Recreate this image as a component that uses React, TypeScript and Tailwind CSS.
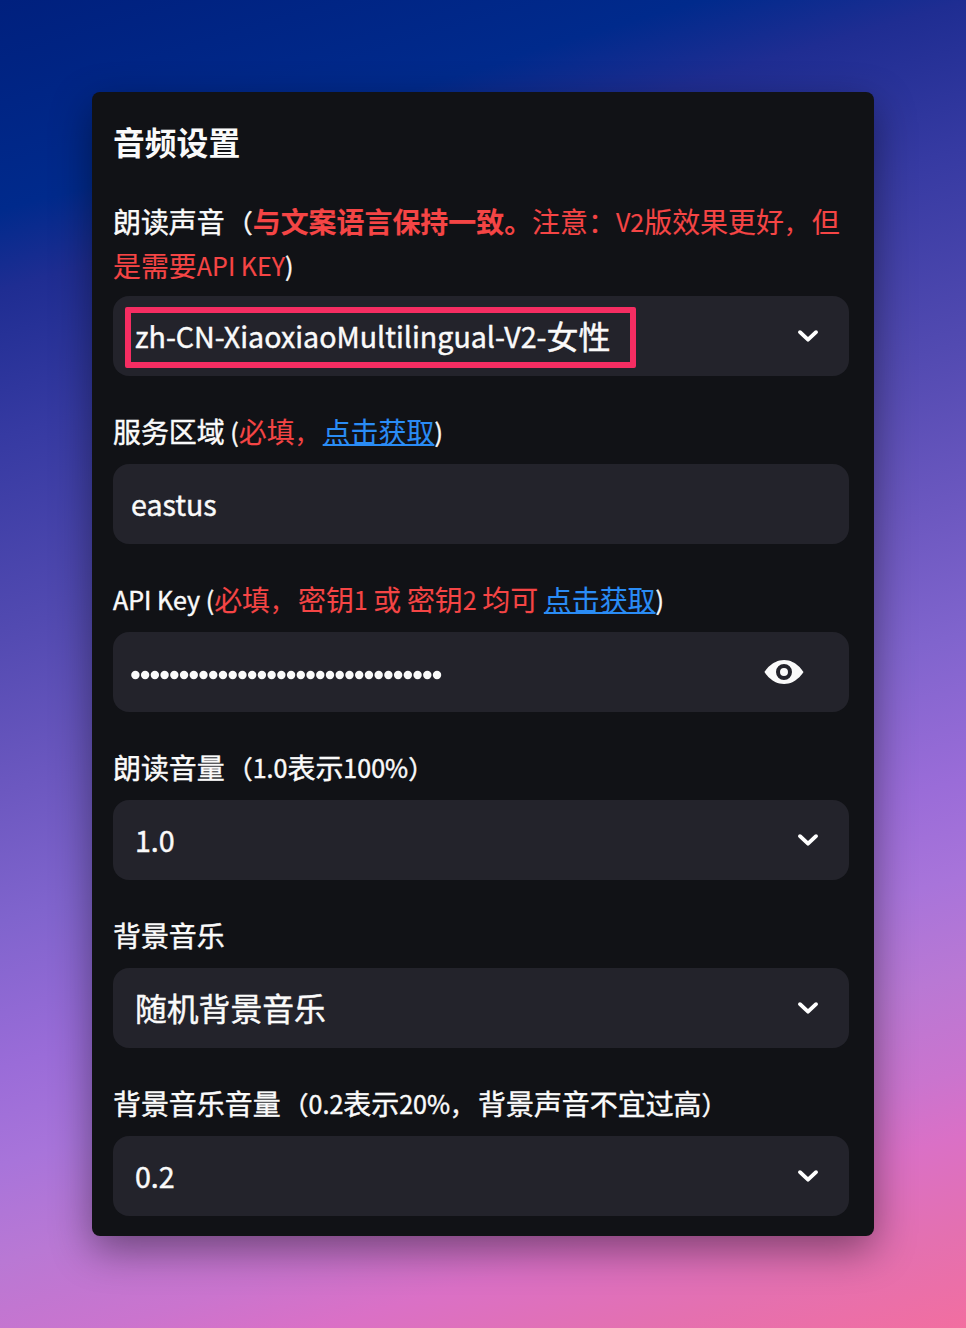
import React from "react";

const L = ({ children }: { children: React.ReactNode }) => (
  <span className="relative -top-px text-[25.05px] leading-none">{children}</span>
);

const Red = ({ children }: { children: React.ReactNode }) => (
  <span className="text-[#f54545] [-webkit-text-stroke:0.1px]">{children}</span>
);

const Comma = () => <span className="mr-[3.95px] text-[24px] leading-none">，</span>;
const Open = () => <span className="ml-[2.45px] text-[25.5px] leading-none">（</span>;
const Close = () => <span className="text-[25.5px] leading-none">）</span>;

const Chevron = () => (
  <svg className="-mt-[2px] h-8 w-8 shrink-0" viewBox="0 0 32 32" fill="none" stroke="white" strokeWidth="3.9" strokeLinecap="round" strokeLinejoin="round">
    <path d="M8 13.2 16 20.7l8-7.5" />
  </svg>
);

const Eye = () => (
  <svg className="h-10 w-10 shrink-0" viewBox="0 0 8 8" fill="#fafafa">
    <path d="M4.03 1.6C1.5 1.6.1 4 .1 4s1.4 2.4 3.93 2.4C6.5 6.4 7.9 4 7.9 4S6.5 1.6 4.03 1.6zM4 2.4a1.6 1.6 0 1 1 0 3.2 1.6 1.6 0 0 1 0-3.2zM4 3.2a.8.8 0 1 0 0 1.6.8.8 0 0 0 0-1.6z" />
  </svg>
);

const Label = ({ children }: { children: React.ReactNode }) => (
  <div className="mb-[10px] h-[45px] whitespace-pre text-[27.95px] leading-[44px]">{children}</div>
);

const Box = ({ children, input = false }: { children: React.ReactNode; input?: boolean }) => (
  <div
    className={
      input
        ? "flex h-20 items-center justify-between rounded-2xl bg-[#23232b] pl-[18px] pr-[45px] text-[28.6px]"
        : "flex h-20 items-center justify-between rounded-2xl bg-[#23232b] pl-[22px] pr-[25px] text-[28.6px]"
    }
  >
    {children}
  </div>
);

const Link = () => (
  <a className="text-[#2a8cf5] underline decoration-2 underline-offset-[1px] [-webkit-text-stroke:0.1px]">点击获取</a>
);

export default function App() {
  return (
    <div className="h-[1328px] w-[966px] overflow-hidden bg-[linear-gradient(163.3deg,#00207e_0%,#002a8c_13%,#1f2d92_18%,#363aa2_27%,#524ab1_39%,#6c58c0_49%,#8064cd_57%,#9a6cd8_66%,#a874da_72%,#b978d4_78%,#ca74ce_84%,#da70c6_88%,#e470b0_94%,#f26ea0_100%)] px-[92px] pt-[92px] font-['Noto_Sans_CJK_SC',sans-serif] text-[#fafafa] [-webkit-text-stroke:0.45px]">
      <div className="h-[1144px] w-[782px] rounded-lg bg-[#111216] pl-[21px] pr-[25px] pt-[19px] shadow-[0_14px_40px_rgba(0,0,0,0.42)]">
        <h2 className="h-[60px] text-[31.8px] font-bold leading-[60px] [-webkit-text-stroke:0px]">音频设置</h2>
        <div className="mb-[9px] mt-[28px] h-[88px] whitespace-nowrap text-[27.95px] leading-[44px]">
          朗读声音<Open /><Red><b>与文案语言保持一致。</b>注意：<L>V2</L>版效果更好<Comma />但<br />是需要<L>API KEY</L></Red><L>)</L>
        </div>
        <Box>
          <span className="-ml-[10px] mt-[2px] flex h-[61px] w-[511px] items-center whitespace-nowrap rounded-[2px] border-[6px] border-[#f52d62] pb-[2px] pl-1">
            zh-CN-XiaoxiaoMultilingual-V2-<span className="pb-[2px] text-[32px]">女性</span>
          </span>
          <Chevron />
        </Box>
        <div className="mt-[33px]">
          <Label>服务区域<L> (</L><Red>必填<Comma /></Red><Link /><L>)</L></Label>
          <Box input>eastus</Box>
        </div>
        <div className="mt-[33px]">
          <Label><L>API Key (</L><Red>必填<Comma />密钥<L>1 </L>或<L> </L>密钥<L>2 </L>均可<L> </L></Red><Link /><L>)</L></Label>
          <Box input>
            <svg className="mt-[6px] h-3 w-[312px]" viewBox="0 0 312 12" fill="#fafafa">
              {Array.from({ length: 32 }, (_, i) => <circle key={i} cx={4.4 + i * 9.73} cy="6" r="4.2" />)}
            </svg>
            <Eye />
          </Box>
        </div>
        <div className="mt-[33px]">
          <Label>朗读音量<Open /><L>1.0</L>表示<L>100%</L><Close /></Label>
          <Box>1.0<Chevron /></Box>
        </div>
        <div className="mt-[33px]">
          <Label>背景音乐</Label>
          <Box><span className="pb-px text-[31.8px]">随机背景音乐</span><Chevron /></Box>
        </div>
        <div className="mt-[33px]">
          <Label>背景音乐音量<Open /><L>0.2</L>表示<L>20%</L><Comma />背景声音不宜过高<Close /></Label>
          <Box>0.2<Chevron /></Box>
        </div>
      </div>
    </div>
  );
}
